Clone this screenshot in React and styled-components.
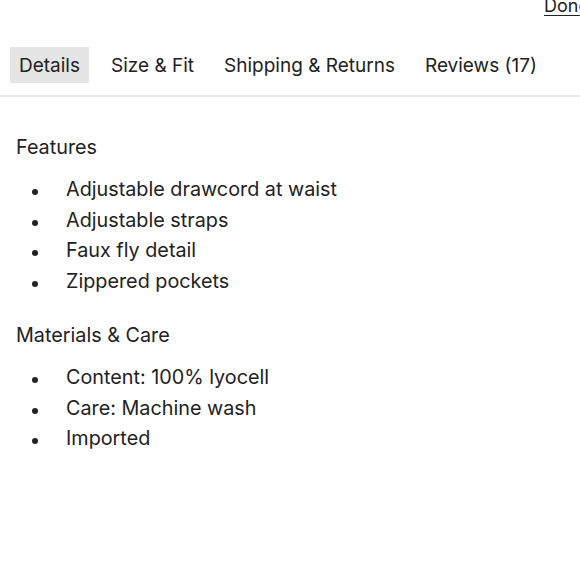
import React from 'react';
import styled, { createGlobalStyle } from 'styled-components';

const GlobalStyle = createGlobalStyle`
  html, body {
    margin: 0;
    padding: 0;
    background: #ffffff;
  }
  body {
    font-family: Inter, 'Liberation Sans', sans-serif;
    color: #222222;
    overflow: hidden;
  }
`;

const features = [
  'Adjustable drawcord at waist',
  'Adjustable straps',
  'Faux fly detail',
  'Zippered pockets',
];

const materials = ['Content: 100% lyocell', 'Care: Machine wash', 'Imported'];

const tabs = ['Details', 'Size & Fit', 'Shipping & Returns', 'Reviews (17)'];

const App = () => {
  return (
    <Page>
      <GlobalStyle />
      <TopBar>
        <DoneLink href="#">Done</DoneLink>
      </TopBar>
      <TabBar>
        {tabs.map((tab, i) => (
          <Tab key={tab} active={i === 0}>
            {tab}
          </Tab>
        ))}
      </TabBar>
      <Content>
        <Heading>Features</Heading>
        <List>
          {features.map((item) => (
            <Item key={item}>{item}</Item>
          ))}
        </List>
        <Heading>Materials &amp; Care</Heading>
        <List>
          {materials.map((item) => (
            <Item key={item}>{item}</Item>
          ))}
        </List>
      </Content>
    </Page>
  );
};

const Page = styled.div`
  width: 580px;
  height: 580px;
  overflow: hidden;
`;

const TopBar = styled.div`
  display: flex;
  height: 20px;
  padding-left: 544px;
  white-space: nowrap;
`;

const DoneLink = styled.a`
  color: #222222;
  font-size: 18px;
  line-height: 14px;
  text-decoration: underline;
  text-underline-offset: 3px;
  text-decoration-thickness: 1px;
  margin-top: -1px;
`;

const TabBar = styled.div`
  display: flex;
  align-items: center;
  gap: 14px;
  padding: 27px 10px 12px;
  border-bottom: 2px solid #e8e8e8;
`;

const Tab = styled.div`
  height: 36px;
  display: flex;
  align-items: center;
  padding: 0 ${(p) => (p.active ? '9px' : '8px')};
  font-size: 19px;
  background: ${(p) => (p.active ? '#e5e5e5' : 'transparent')};
`;

const Content = styled.div`
  padding: 38px 16px 0;
`;

const Heading = styled.div`
  font-size: 19.8px;
  line-height: 24px;
  margin-bottom: 15px;
`;

const List = styled.ul`
  list-style: none;
  margin: 0 0 27px;
  padding: 0;
`;

const Item = styled.li`
  position: relative;
  padding-left: 50px;
  font-size: 19.8px;
  line-height: 30.5px;

  &:before {
    content: '';
    position: absolute;
    left: 16px;
    top: 15px;
    width: 6px;
    height: 6px;
    border-radius: 50%;
    background: #222222;
  }
`;

export default App;
